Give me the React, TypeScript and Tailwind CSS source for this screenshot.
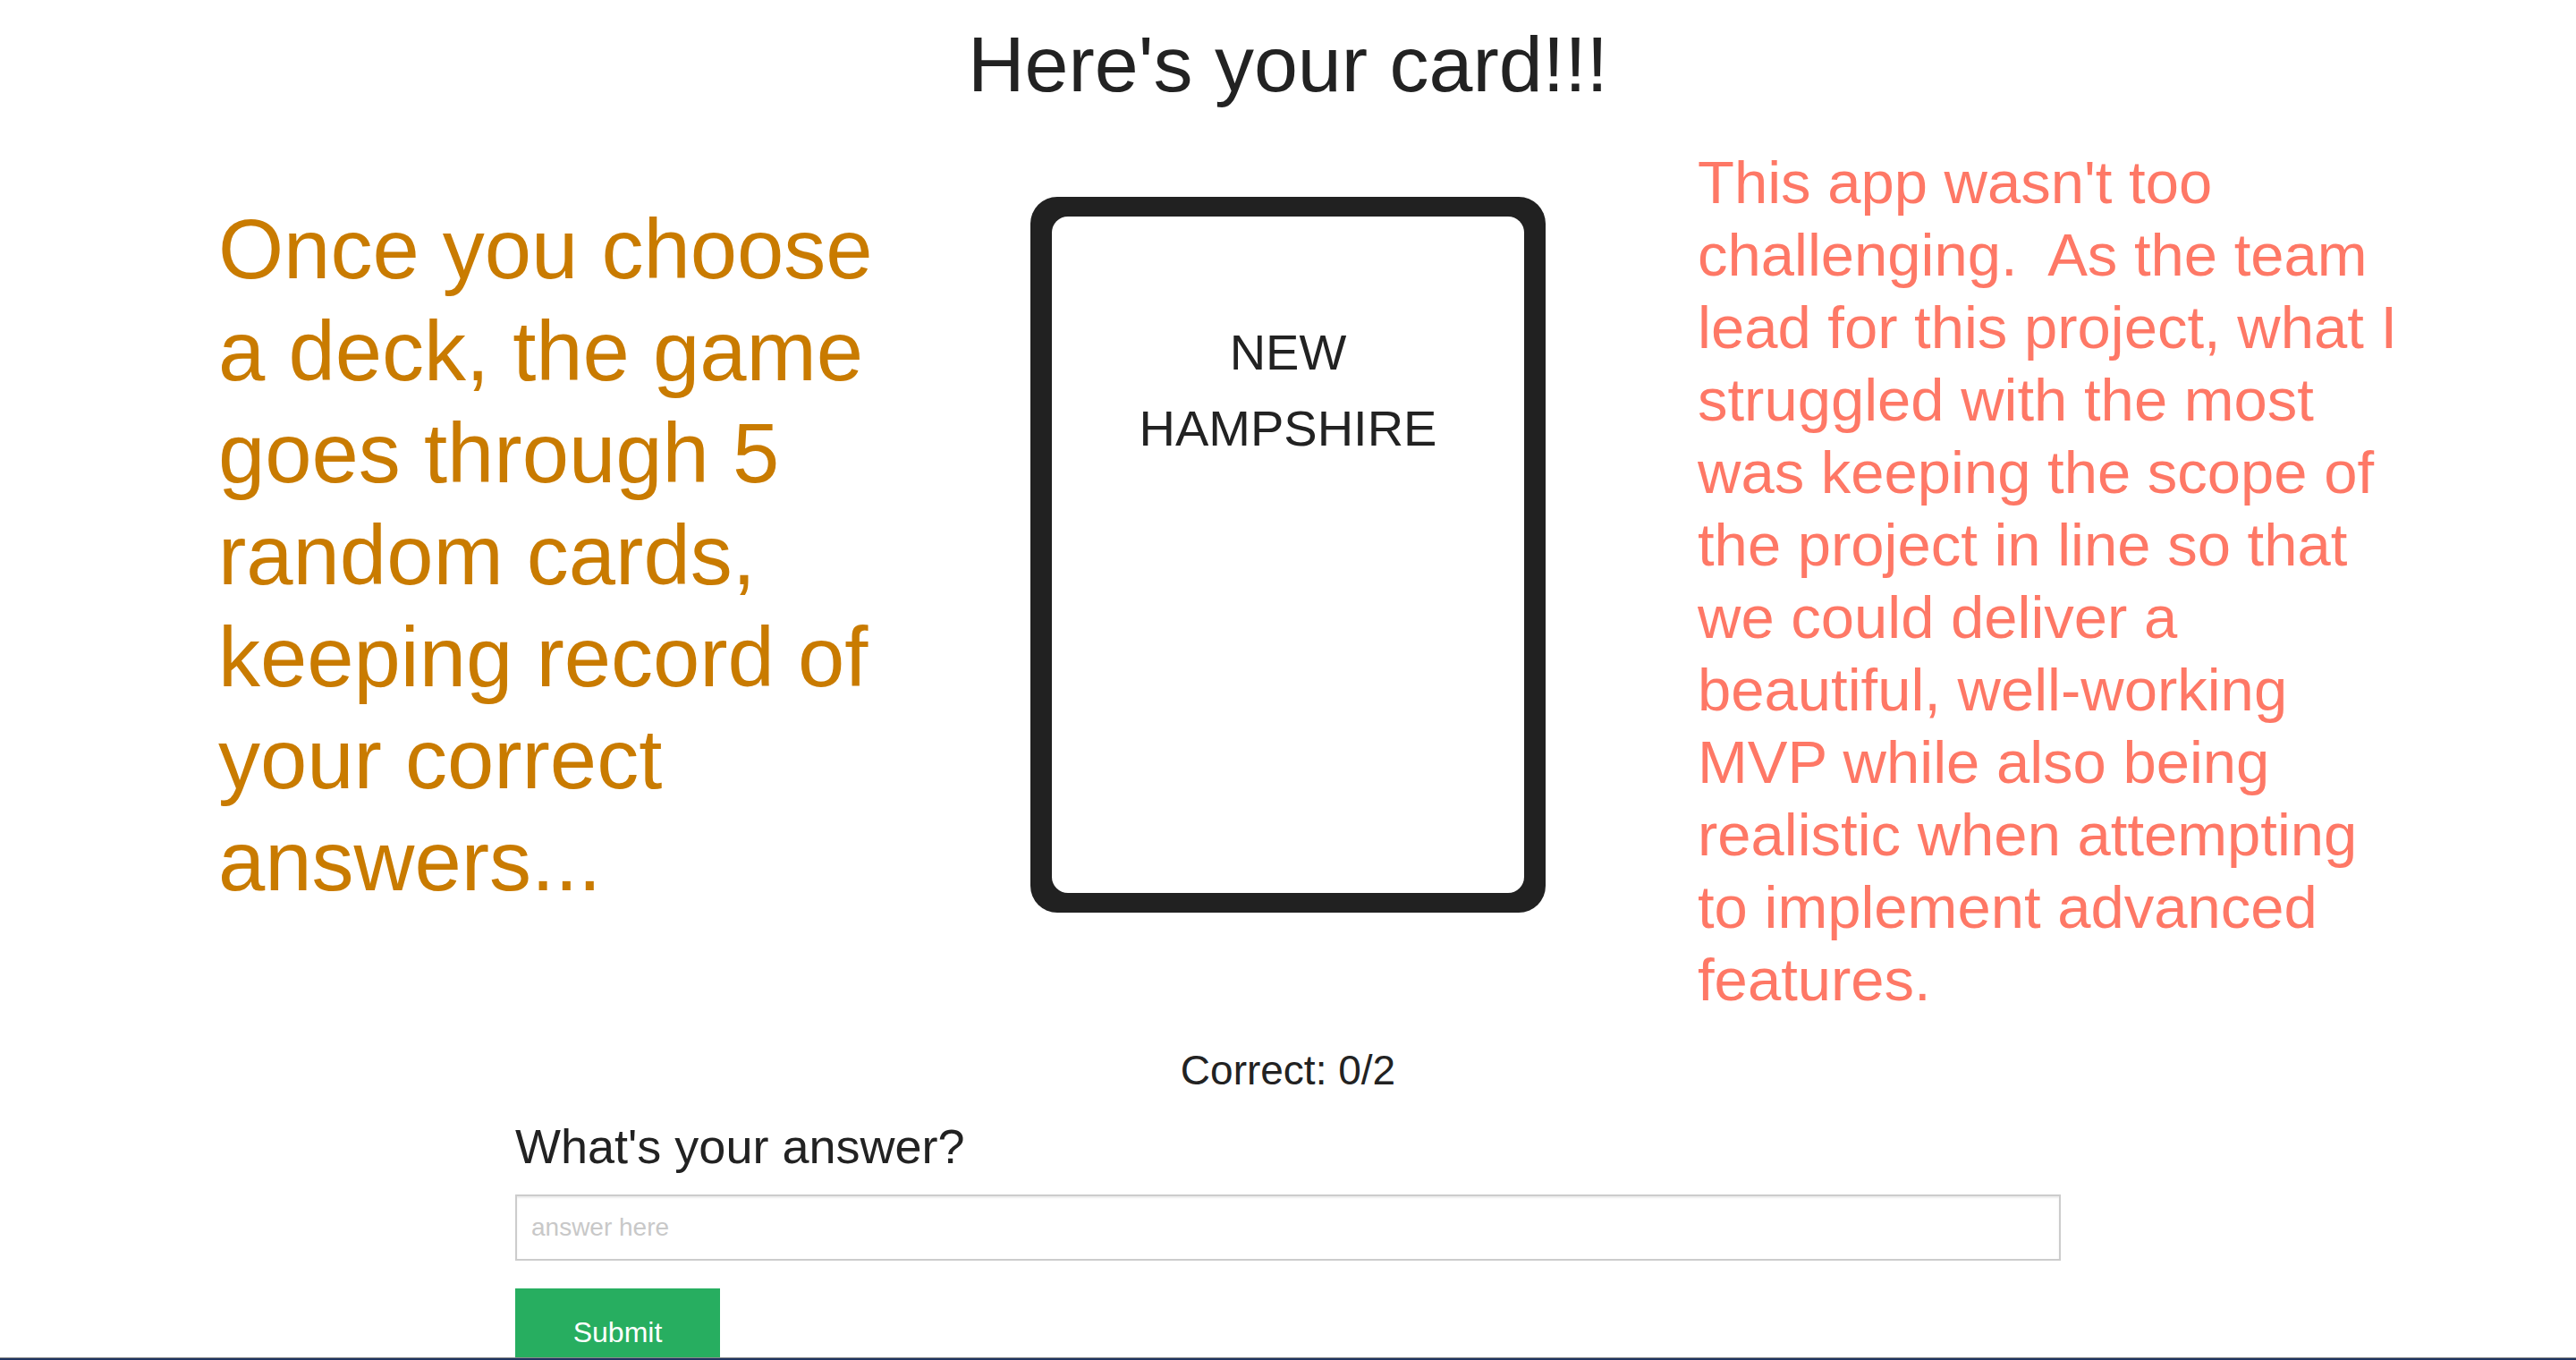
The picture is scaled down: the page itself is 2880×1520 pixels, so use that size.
import React from 'react';

const sans = "font-['Liberation_Sans',Arial,Helvetica,sans-serif]";

const FlashCard: React.FC<{ word: string[] }> = ({ word }) => (
  <div className="mt-[57px] w-[576px] h-[800px] shrink-0 rounded-[30px] bg-[#212121] px-[24px] py-[22px]">
    <div className="h-full rounded-[18px] bg-white pt-[109px] text-center text-[56px] leading-[85px] text-[#222]">
      {word.map((line) => (
        <div key={line}>{line}</div>
      ))}
    </div>
  </div>
);

export default function App() {
  return (
    <div className={`${sans} min-h-screen bg-white text-[#222]`}>
      <h1 className="pt-[28px] text-center text-[88px] leading-[88px] font-normal">Here's your card!!!</h1>

      <div className="mt-[47px] flex items-start pl-[244px]">
        <p className="mt-[59px] w-[790px] shrink-0 text-[94px] leading-[114px] text-[#c97b00]">
          Once you choose a deck, the game goes through 5 random cards, keeping record of your correct answers...
        </p>
        <div className="ml-[118px]">
          <FlashCard word={['NEW', 'HAMPSHIRE']} />
        </div>
        <p className="ml-[170px] w-[795px] shrink-0 text-[67px] leading-[81px] text-[#fe7866]">
          This app wasn't too challenging.{'\u00a0'} As the team lead for this project, what I struggled with the most was
          keeping the scope of the project in line so that we could deliver a beautiful, well-working MVP while also being
          realistic when attempting to implement advanced features.
        </p>
      </div>

      <div className="mt-[35px] text-center text-[46px] leading-[52px]">Correct: 0/2</div>

      <form className="mx-auto mt-[28px] w-[1728px]" onSubmit={(e) => e.preventDefault()}>
        <label className="block text-[54px] leading-[62px]">What's your answer?</label>
        <input
          type="text"
          placeholder="answer here"
          className="mt-[23px] block h-[74px] w-full border-2 border-[#cccccc] bg-white px-[16px] text-[28px] shadow-[inset_0_2px_2px_rgba(0,0,0,0.075)] outline-none placeholder:text-[#c8c8c8]"
        />
        <button
          type="submit"
          className="mt-[31px] block w-[229px] bg-[#27ae60] pt-[26px] pb-[26px] text-center text-[32px] leading-[46px] text-white"
        >
          Submit
        </button>
      </form>

      <div className="fixed bottom-0 left-0 right-0 h-[3px] border-t border-[#8a8a8a] bg-[#1f3460]" />
    </div>
  );
}
